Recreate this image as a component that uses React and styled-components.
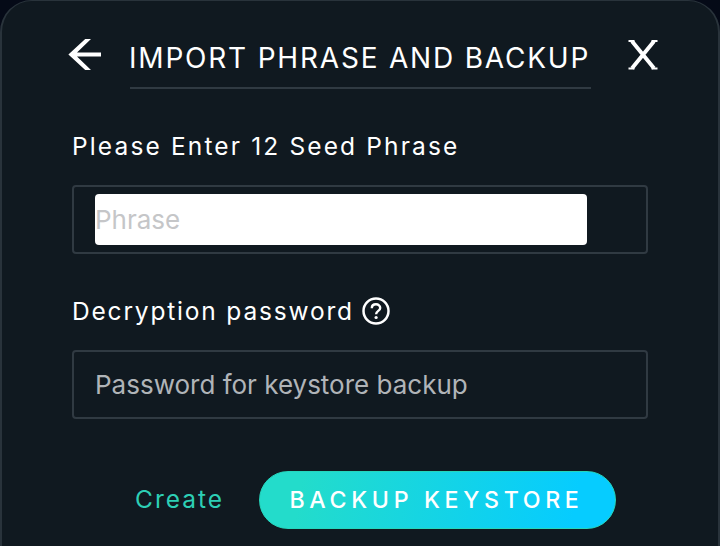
import React, { useState } from "react";
import styled, { createGlobalStyle } from "styled-components";

export default function App() {
  const [phrase, setPhrase] = useState("");
  const [password, setPassword] = useState("");

  return (
    <Page>
      <GlobalStyle />
      <Modal>
        <Header>
          <IconButton aria-label="Back">
            <BackIcon />
          </IconButton>
          <Title>IMPORT PHRASE AND BACKUP</Title>
          <IconButton aria-label="Close">
            <CloseIcon />
          </IconButton>
        </Header>
        <Label $spacing="2.14px">Please Enter 12 Seed Phrase</Label>
        <Field>
          <PhraseInput
            placeholder="Phrase"
            value={phrase}
            onChange={(e) => setPhrase(e.target.value)}
          />
        </Field>
        <Label $spacing="1.82px">
          Decryption password
          <HelpIcon />
        </Label>
        <Field>
          <Input
            type="password"
            placeholder="Password for keystore backup"
            value={password}
            onChange={(e) => setPassword(e.target.value)}
          />
        </Field>
        <Actions>
          <CreateButton>Create</CreateButton>
          <BackupButton>BACKUP KEYSTORE</BackupButton>
        </Actions>
      </Modal>
    </Page>
  );
}

function BackIcon() {
  return (
    <svg width="34" height="34" viewBox="0 0 34 34" fill="#fff">
      <path d="M17.2 2H23L9 15.4H33V19.4H9L23 33H17.2L0.4 17.4Z" />
    </svg>
  );
}

function CloseIcon() {
  return (
    <svg width="30" height="33" viewBox="0 0 30 33" fill="none" stroke="#fff">
      <path d="M4 4.2L26 31.3M26 4.2L4 31.3" strokeWidth="3.9" />
      <path d="M0.5 4H6.5M23.5 4H29.5M0.5 31.5H6.5M23.5 31.5H29.5" strokeWidth="1.8" />
    </svg>
  );
}

function HelpIcon() {
  return (
    <svg width="28" height="28" viewBox="0 0 28 28" fill="none" stroke="#fff">
      <circle cx="14" cy="14" r="12.5" strokeWidth="2.5" />
      <path
        d="M9.8 11.2C9.8 8.7 11.6 7.3 14 7.3S18.2 8.8 18.2 11C18.2 13.9 14.1 13.9 14.1 17.2"
        strokeWidth="2.4"
      />
      <circle cx="14.1" cy="20.5" r="1.6" fill="#fff" stroke="none" />
    </svg>
  );
}

const GlobalStyle = createGlobalStyle`
  * {
    box-sizing: border-box;
  }

  body {
    margin: 0;
    background: #050a17;
    overflow: hidden;
  }

  body, button, input {
    font-family: Inter, "Liberation Sans", sans-serif;
  }
`;

const Page = styled.div`
  height: 100vh;
  overflow: hidden;
`;

const Modal = styled.div`
  height: 600px;
  padding: 36px 70px 0;
  border: 2px solid #29333b;
  border-top-width: 1px;
  border-radius: 32px;
  background: #101920;
`;

const Header = styled.div`
  display: flex;
  align-items: flex-start;
  justify-content: space-between;
  margin: 0 -10px 0 -4px;
`;

const IconButton = styled.button`
  display: flex;
  padding: 0;
  border: 0;
  background: none;
  cursor: pointer;
`;

const Title = styled.h1`
  width: 461px;
  height: 52px;
  margin: 0 10px 0 0;
  border-bottom: 2px solid #303a42;
  color: #fff;
  font-size: 28px;
  font-weight: 400;
  line-height: 42px;
  letter-spacing: 1.8px;
  text-indent: -0.5px;
  white-space: nowrap;
`;

const Label = styled.div`
  display: flex;
  align-items: center;
  gap: 8px;
  height: 32px;
  margin-top: 41px;
  color: #fff;
  font-size: 24.5px;
  letter-spacing: ${(p) => p.$spacing};
  white-space: nowrap;
`;

const Field = styled.div`
  display: flex;
  align-items: center;
  height: 69px;
  margin-top: 23px;
  padding: 0 21px;
  border: 2px solid #303a42;
  border-radius: 4px;
`;

const Input = styled.input`
  width: 492px;
  height: 51px;
  padding: 0;
  border: 0;
  border-radius: 4px;
  outline: none;
  background: transparent;
  color: #fff;
  font-size: 26px;

  &::placeholder {
    color: #b0b4b8;
    opacity: 1;
  }
`;

const PhraseInput = styled(Input)`
  background: #fff;
  color: #101920;

  &::placeholder {
    color: #c5c6c8;
  }
`;

const Actions = styled.div`
  display: flex;
  align-items: center;
  margin: 52px 0 0 63px;
`;

const CreateButton = styled.button`
  width: 124px;
  padding: 0 0 2px;
  border: 0;
  background: none;
  color: #2dcfb5;
  font-size: 24.5px;
  letter-spacing: 2px;
  text-align: left;
  cursor: pointer;
`;

const BackupButton = styled.button`
  width: 357px;
  height: 58px;
  padding: 0 2px 0 0;
  border: 1px solid #25d6bd;
  border-radius: 29px;
  background: linear-gradient(100deg, #23dccb 12%, #06ccff 88%);
  background-origin: border-box;
  color: #fff;
  font-size: 23.2px;
  font-weight: 500;
  letter-spacing: 4.65px;
  white-space: nowrap;
  cursor: pointer;
`;
